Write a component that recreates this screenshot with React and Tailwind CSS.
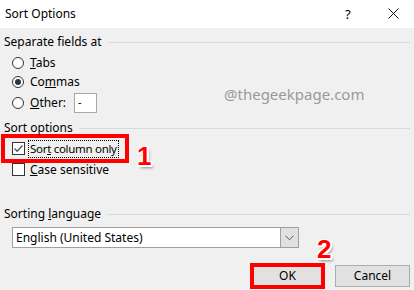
import React from "react";

const font = "font-['Noto_Sans','Liberation_Sans',sans-serif]";

const GroupLabel = ({ children, className = "" }) => (
  <div className={"flex items-center h-[12px] " + className}>
    <span className="pl-[4px] pr-[6px] leading-[12px] whitespace-nowrap">{children}</span>
    <div className="flex-1 h-px bg-[#dadada] mr-[4px]" />
  </div>
);

const Radio = ({ checked }) => (
  <span className="w-[12px] h-[12px] rounded-full border border-[#333] bg-white flex items-center justify-center shrink-0">
    {checked && <span className="w-[6px] h-[6px] rounded-full bg-[#333]" />}
  </span>
);

const Check = ({ checked }) => (
  <span className="w-[13px] h-[13px] border border-[#333] bg-white flex items-center justify-center shrink-0">
    {checked && (
      <svg width="11" height="11" viewBox="0 0 11 11">
        <path d="M1.5 5.5 L4.2 8.2 L9.5 2.5" fill="none" stroke="#555" strokeWidth="1.3" />
      </svg>
    )}
  </span>
);

const badge =
  "absolute font-['Liberation_Sans',sans-serif] font-bold text-[26px] leading-none text-[#ff0000] [text-shadow:-1.5px_-1.5px_0_#fff,1.5px_-1.5px_0_#fff,-1.5px_1.5px_0_#fff,1.5px_1.5px_0_#fff,0_2px_0_#fff,2px_0_0_#fff,2px_3px_3px_#8a8a8a]";

export default function App() {
  return (
    <div className={"relative w-[414px] h-[290px] bg-[#f0f0f0] overflow-hidden text-[12px] text-black " + font}>
      {/* title bar */}
      <div className="h-[28px] bg-white flex items-center pl-[5px]">
        <span>Sort Options</span>
        <span className="absolute left-[345px] top-[5px] text-[13px]">?</span>
        <svg className="absolute left-[388px] top-[8px]" width="11" height="11" viewBox="0 0 11 11">
          <path d="M0.5 0.5 L10.5 10.5 M10.5 0.5 L0.5 10.5" stroke="#111" strokeWidth="1" />
        </svg>
      </div>

      <div className="pt-[8px]">
        <GroupLabel>Separate fields at</GroupLabel>
        <div className="mt-[5px] pl-[12px]">
          <div className="h-[19px] flex items-center gap-[6px]">
            <Radio />
            <span><u>T</u>abs</span>
          </div>
          <div className="h-[19px] flex items-center gap-[6px]">
            <Radio checked />
            <span>Co<u>m</u>mas</span>
          </div>
          <div className="mt-[1px] h-[21px] flex items-center gap-[6px]">
            <Radio />
            <span className="w-[38px]"><u>O</u>ther:</span>
            <div className="w-[23px] h-[20px] bg-white border border-[#a9a9a9] flex items-center pl-[3px] text-[11px]">-</div>
          </div>
        </div>

        <GroupLabel className="mt-[9px]">Sort options</GroupLabel>
        <div className="ml-[1px] w-[128px] h-[29px] border-[4px] border-[#ff0000] flex items-center pl-[7px] gap-[3px]">
          <Check checked />
          <span className="border border-dotted border-black px-[1px] leading-[16px] whitespace-nowrap text-[11.5px] tracking-[-0.3px]">
            Sor<u>t</u> column only
          </span>
        </div>
        <div className="h-[13px] flex items-center gap-[5px] pl-[12px]">
          <Check />
          <span className="whitespace-nowrap"><u>C</u>ase sensitive</span>
        </div>

        <GroupLabel className="mt-[32px]">
          Sorting <u>l</u>anguage
        </GroupLabel>
        <div className="mt-[7px] ml-[12px] w-[287px] h-[21px] bg-white border border-[#a0a0a0] flex">
          <span className="flex-1 pl-[3px] leading-[19px]">English (United States)</span>
          <div className="w-[18px] h-full bg-[#e1e1e1] border-l border-[#a0a0a0] flex items-center justify-center">
            <svg width="9" height="6" viewBox="0 0 9 6">
              <path d="M0.5 0.8 L4.5 4.8 L8.5 0.8" fill="none" stroke="#555" strokeWidth="1" />
            </svg>
          </div>
        </div>

        <div className="mt-[15px] flex justify-end items-center gap-[10px] pr-[4px]">
          <div className="w-[75px] h-[26px] border-[4px] border-[#ff0000] bg-[#e1e1e1] flex items-center justify-center">
            OK
          </div>
          <div className="w-[75px] h-[22px] border border-[#adadad] bg-[#e1e1e1] flex items-center justify-center">
            Cancel
          </div>
        </div>
      </div>

      {/* overlays */}
      <span className="absolute left-[224px] top-[83px] text-[15px] text-[#9a9a9a] font-['Noto_Sans',sans-serif]">
        @thegeekpage.com
      </span>
      <span className={badge + " left-[137px] top-[143px]"}>1</span>
      <span className={badge + " left-[317px] top-[236px]"}>2</span>
    </div>
  );
}
